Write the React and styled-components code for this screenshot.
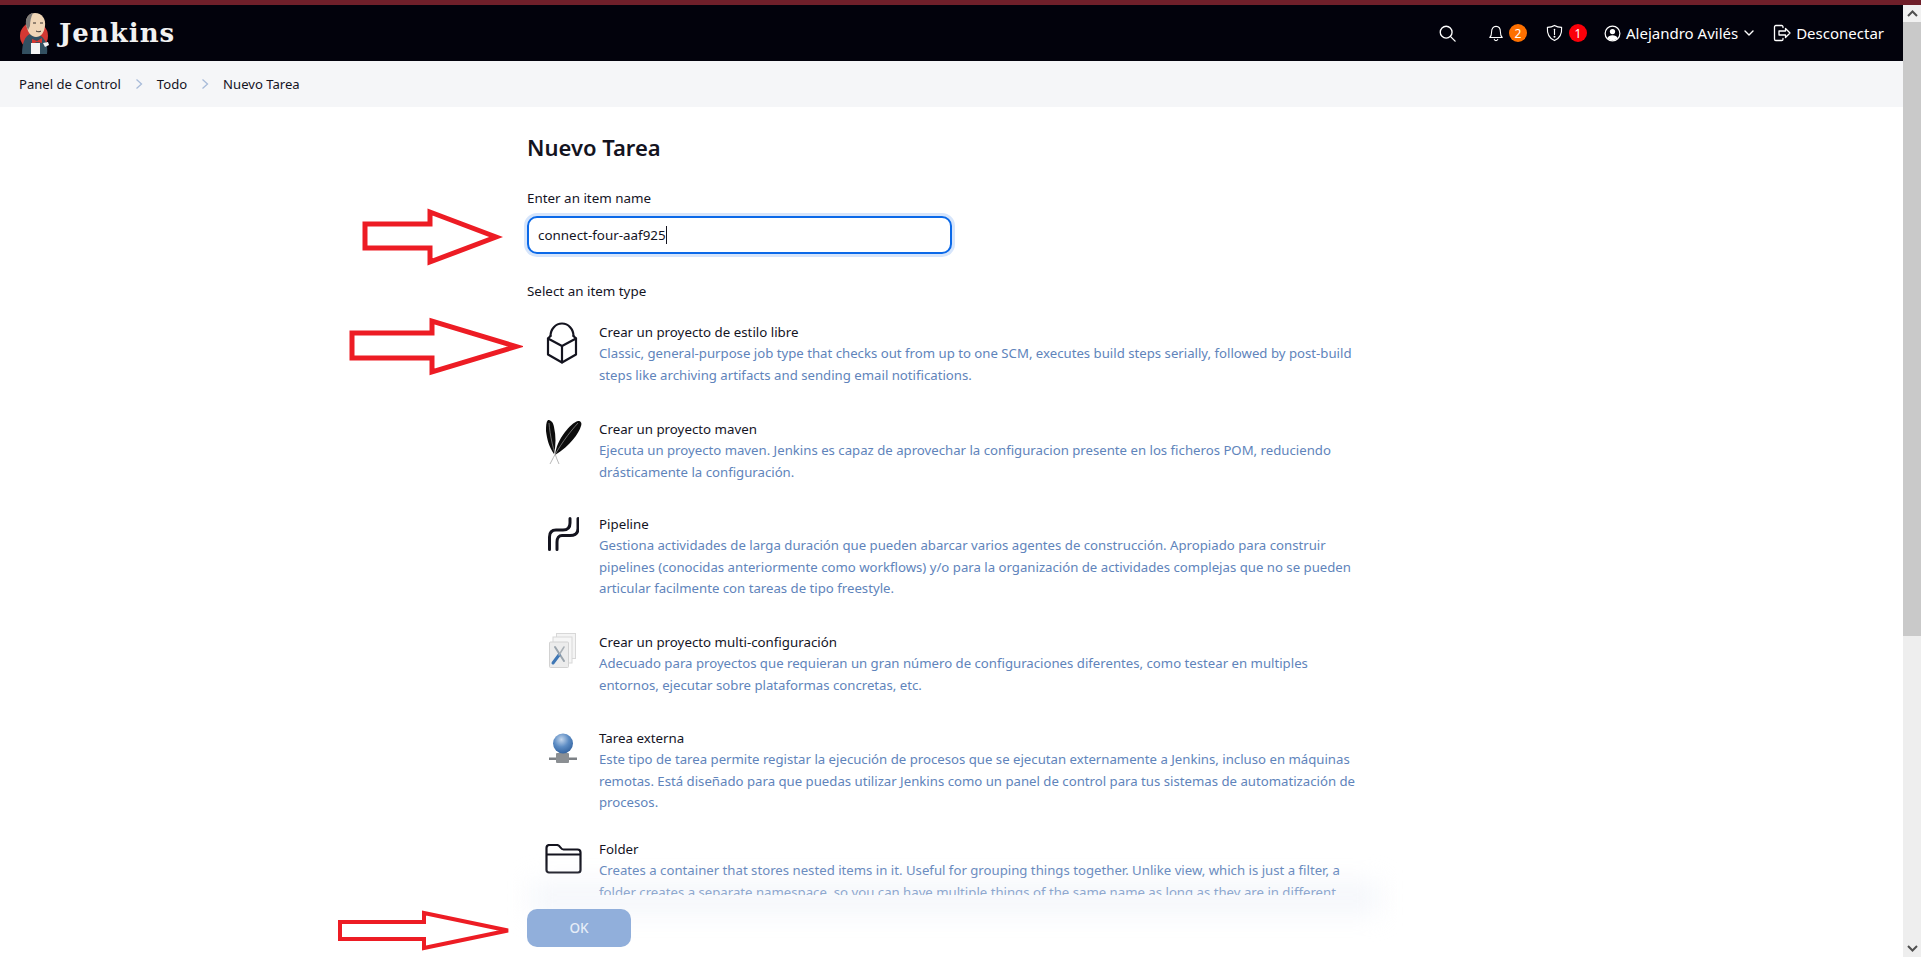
import React from 'react';
import styled, { createGlobalStyle } from 'styled-components';

const Global = createGlobalStyle`
  html, body { margin: 0; height: 100%; overflow: hidden; background: #fff; }
  body { font-family: "Noto Sans", "Open Sans", sans-serif; color: #14141f; }
  * { box-sizing: border-box; }
`;
const Shell = styled.div`display: flex; width: 1921px; height: 957px; position: relative; overflow: hidden;`;
const Page = styled.div`flex: 1; min-width: 0; display: flex; flex-direction: column; position: relative; overflow: hidden;`;
const Rail = styled.div`width: 18px; flex: none; margin-top: 5px; background: #eee; display: flex; flex-direction: column;`;
const RailBtn = styled.div`height: 17px; display: flex; align-items: center; justify-content: center; background: ${p => p.$top ? '#f1f1f1' : '#eee'};`;
const Thumb = styled.div`height: 614px; background: #c9c9c9;`;
const RailFill = styled.div`flex: 1;`;
const TopStripe = styled.div`position: absolute; top: 0; left: 0; width: 1921px; height: 5px; background: #6f1f2a; z-index: 5;`;
const Header = styled.header`height: 61px; padding: 5px 19px 0 19px; flex: none; background: #02020c; color: #fff; display: flex; align-items: center;`;
const Brand = styled.div`display: flex; align-items: center; gap: 10px;`;
const BrandName = styled.span`font-family: "DejaVu Serif", serif; font-weight: 700; font-size: 26px; letter-spacing: 1px; line-height: 1; color: #f2f2f2;`;
const Nav = styled.nav`margin-left: auto; display: flex; align-items: center; font-size: 15px;`;
const NavItem = styled.div`display: flex; align-items: center; gap: ${p => p.$gap || 5}px; margin-left: ${p => p.$ml || 0}px; white-space: nowrap; color: #fff;`;
const Badge = styled.span`width: 18px; height: 18px; border-radius: 50%; background: ${p => p.$c}; color: #fff; font-size: 12px; display: flex; align-items: center; justify-content: center;`;
const Crumbs = styled.div`height: 46px; flex: none; background: #f5f6f8; display: flex; align-items: center; padding: 0 19px; font-size: 13.1px; color: #14141f;`;
const Sep = styled.span`display: flex; margin: 0 14px;`;
const Main = styled.main`padding: 25px 0 0 527px; width: 1363px;`;
const Title = styled.h1`margin: 0 0 26px; font-size: 22px; line-height: 30px; font-weight: 600; color: #14141f;`;
const Label = styled.div`font-size: 13.4px; line-height: 20px; margin-bottom: ${p => p.$mb}px; color: #14141f;`;
const Field = styled.div`width: 425px; height: 38px; border: 2px solid #0b69e8; border-radius: 10px; box-shadow: 0 0 0 3px #d6e5fb; padding: 0 9px; display: flex; align-items: center; font-size: 13.4px; margin-bottom: 27px; background: #fff;`;
const Caret = styled.span`width: 1px; height: 18px; background: #14141f;`;
const List = styled.div`display: flex; flex-direction: column;`;
const Row = styled.div`display: flex; min-height: ${p => p.$h}px;`;
const IconBox = styled.div`width: 72px; flex: none; padding: ${p => p.$top}px 0 0 18px; & > svg { display: block; }`;
const Body = styled.div`width: 760px;`;
const ItemName = styled.div`font-size: 13.3px; line-height: 21px; color: #14141f;`;
const Desc = styled.div`font-size: 13.2px; line-height: 21.6px; color: #6084bb;`;
const Footer = styled.div`position: absolute; left: 0; right: 0; bottom: 0; height: 62px; background: #fff; padding: 14px 0 0 527px;
  &::before { content: ""; position: absolute; left: 530px; width: 850px; top: -14px; height: 34px; background: rgba(232,237,246,.42); filter: blur(12px); }`;
const OkButton = styled.button`position: relative; width: 104px; height: 38px; border: 0; border-radius: 10px; background: #91afdb; color: #e6edf7; font: 500 13.5px "Noto Sans", sans-serif;`;
const Mark = styled.svg`position: absolute; z-index: 4; left: ${p => p.$x}px; top: ${p => p.$y}px;`;

const Arrow = ({ l, bt, bb, hx, ht, hb, tip, sw }) => {
  const ox = l - 5;
  const oy = ht - 5;
  const mid = (ht + hb) / 2 - oy;
  return (
    <Mark $x={ox} $y={oy} width={tip - l + 12} height={hb - ht + 10}>
      <path d={`M5 ${bt - oy} H${hx - ox} V5 L${tip - ox} ${mid} L${hx - ox} ${hb - oy} V${bb - oy} H5 Z`} fill="none" stroke="#ed1c24" strokeWidth={sw} strokeLinejoin="miter" />
    </Mark>
  );
};

const Logo = () => (
  <svg width="30" height="41" viewBox="0 0 30 41">
    <circle cx="15" cy="23" r="14" fill="#d33833" />
    <path d="M3 41 C3 30 6 23 11 21 L22 23 C27 27 29 33 28 41Z" fill="#335061" />
    <path d="M7 10 C7 3 11 0 16 0 C23 0 27 6 26 13 C25 20 22 24 17 24 C12 24 8 19 7 10Z" fill="#f0d6b7" />
    <path d="M7 12 C6 5 10 1 14 0 C12 4 11 8 11 13 L9 17Z" fill="#7d7a78"/>
    <path d="M14 10h3M21 10h3M17 18c2 1 4 1 5 0" stroke="#231f20" strokeWidth=".9" fill="none"/>
    <path d="M13 26 L18 28 L23 25 L23 30 L18 29 L13 31Z" fill="#d33833"/>
    <rect x="12" y="30" width="9" height="11" fill="#f4f4f4" />
    <path d="M24 30l5-1 1 3-4 2Z" fill="#f4f4f4" />
  </svg>
);

const stroke = { fill: 'none', stroke: '#fff', strokeWidth: 1.5, strokeLinecap: 'round', strokeLinejoin: 'round' };

const Search = () => <svg width="17" height="17" viewBox="0 0 19 19" {...stroke}><circle cx="8" cy="8" r="6.6"/><path d="M13 13l5 5"/></svg>;
const Bell = () => <svg width="16" height="19" viewBox="0 0 18 20" {...stroke} strokeWidth="1.2"><path d="M2 14.5c1.5-1.5 2-3 2-6C4 4.5 6 2 9 2s5 2.5 5 6.5c0 3 .5 4.5 2 6Z"/><path d="M7 16.5c.3 2 3.7 2 4 0"/></svg>;
const Shield = () => <svg width="19" height="18" viewBox="0 0 19 19" {...stroke} strokeWidth="1.2"><path d="M9.5 1.500c2 1.300 4.500 2 7.500 2 .5 7-2 11.800-7.500 14C4 15.300 1.500 10.500 2 3.500c3 0 5.500-.7 7.500-2Z"/><path d="M9.5 5.500v5.500"/><circle cx="9.5" cy="13.500" r=".5"/></svg>;
const User = () => <svg width="17" height="17" viewBox="0 0 18 18"><circle cx="9" cy="9" r="7.800" fill="none" stroke="#fff" strokeWidth="1.300"/><circle cx="9" cy="7" r="2.800" fill="#fff"/><path d="M3.500 14c1-2.500 3-3.200 5.500-3.200s4.500.7 5.500 3.200c-3 3-8 3-11 0Z" fill="#fff"/></svg>;
const Chevron = () => <svg width="12" height="8" viewBox="0 0 12 8" {...stroke} strokeWidth="1.400"><path d="M2 2l4 4 4-4"/></svg>;
const Logout = () => <svg width="18" height="18" viewBox="0 0 18 18" {...stroke} strokeWidth="1.300"><path d="M10 3.500V2.800c0-.7-.6-1.300-1.300-1.300H2.800c-.7 0-1.300.6-1.300 1.300v12.400c0 .7.6 1.300 1.300 1.300h5.900c.7 0 1.300-.6 1.300-1.300v-.7"/><path d="M6 7h6.500V4.500L17 9l-4.500 4.500V11H6Z"/></svg>;
const CrumbChevron = () => <svg width="8" height="12" viewBox="0 0 8 12" fill="none" stroke="#a8bbd9" strokeWidth="1.300"><path d="M1.500 1.500L6.500 6l-5 4.500"/></svg>;

const box = { fill: 'none', stroke: '#14141f', strokeWidth: 2.2, strokeLinejoin: 'round', strokeLinecap: 'round' };
const FreeIcon = () => <svg width="34" height="42" viewBox="0 0 34 42" {...box}>
  <path d="M5.500 14A11.500 12.500 0 0 1 28.500 14"/>
  <path d="M3 16.500L5.500 14M31 16.500L28.500 14"/>
  <path d="M3 16.500L17 24L31 16.500V32.500L17 40.500L3 32.500Z"/>
  <path d="M17 24V40.500"/>
</svg>;
const Feather = () => <svg width="38" height="46" viewBox="0 0 38 46">
  <path d="M3 1C6 1 8 3 9 8C11 17 11 26 9 35C4 28 2 20 1 12C1 7 1 3 3 1Z" fill="#0c0c0c"/>
  <path d="M33 2C36 2 37 4 36 7C34 14 25 27 10 36C11 28 14 21 20 13C24 8 29 3 33 2Z" fill="#0c0c0c"/>
  <path d="M4 4C5 16 8 32 14 45M33 4C24 14 14 27 5 45" stroke="#9a9a9a" strokeWidth=".7" fill="none"/>
</svg>;
const PipeIcon = () => <svg width="34" height="34" viewBox="0 0 34 34" fill="none" stroke="#14141f" strokeWidth="3" strokeLinecap="round"><path d="M4.500 32.500V20c0-4.500 2.500-7 6.500-7h7c4 0 7-2 7-7V1.500"/><path d="M12 32.500V25c0-4 2-6.500 5-6.500h8c5 0 8-2.500 8-7V1.500"/></svg>;
const MultiIcon = () => <svg width="32" height="36" viewBox="0 0 32 36">
  <rect x="11.500" y=".500" width="19" height="25" fill="#f4f4f4" stroke="#d8d8d8"/>
  <rect x="8" y="4" width="19" height="26" fill="#f6f6f6" stroke="#d8d8d8"/>
  <rect x="4.500" y="9" width="19" height="25.500" rx="1" fill="#ececec" stroke="#d2d2d2"/>
  <path d="M10 14L19 28" stroke="#9aa4ad" strokeWidth="2" strokeLinecap="round"/>
  <path d="M8 30L14 22" stroke="#3f77b5" strokeWidth="3" strokeLinecap="round"/>
  <path d="M14 22L19 14" stroke="#a9b0b6" strokeWidth="1.500" strokeLinecap="round"/>
</svg>;
const GlobeIcon = () => <svg width="34" height="36" viewBox="0 0 34 36">
  <defs><radialGradient id="gl" cx=".42" cy=".3" r=".75"><stop offset="0" stopColor="#c3d6ec"/><stop offset=".5" stopColor="#5c8cc4"/><stop offset="1" stopColor="#2f5f9c"/></radialGradient></defs>
  <rect x="4" y="29.500" width="28" height="2.500" fill="#7d8186"/>
  <rect x="11" y="25" width="13" height="10" rx="1" fill="#8b8f93"/>
  <circle cx="18" cy="15.500" r="10" fill="url(#gl)"/>
</svg>;
const FolderIcon = () => <svg width="37" height="30" viewBox="0 0 37 30" fill="none" stroke="#14141f" strokeWidth="2.200" strokeLinejoin="round"><path d="M1.500 4c0-2 1-3 3-3h7.500c1.500 0 2.500 1 3.500 2.500S17 5.500 18.500 5.500H32.500c2 0 3 1 3 3V26c0 1.500-1 2.500-2.500 2.500H4c-1.500 0-2.500-1-2.500-2.500Z"/><path d="M1.500 10.500h34"/></svg>;
const ScrollArrow = ({ up }) => <svg width="11" height="7" viewBox="0 0 11 7" fill="none" stroke="#505050" strokeWidth="2"><path d={up ? 'M1 6l4.500-4.500L10 6' : 'M1 1l4.500 4.500L10 1'}/></svg>;

const items = [
  { name: 'Crear un proyecto de estilo libre', icon: <FreeIcon/>, top: 0, h: 97, text: 'Classic, general-purpose job type that checks out from up to one SCM, executes build steps serially, followed by post-build steps like archiving artifacts and sending email notifications.' },
  { name: 'Crear un proyecto maven', icon: <Feather/>, top: 0, h: 95, text: 'Ejecuta un proyecto maven. Jenkins es capaz de aprovechar la configuracion presente en los ficheros POM, reduciendo drásticamente la configuración.' },
  { name: 'Pipeline', icon: <PipeIcon/>, top: 3, h: 118, text: 'Gestiona actividades de larga duración que pueden abarcar varios agentes de construcción. Apropiado para construir pipelines (conocidas anteriormente como workflows) y/o para la organización de actividades complejas que no se pueden articular facilmente con tareas de tipo freestyle.' },
  { name: 'Crear un proyecto multi-configuración', icon: <MultiIcon/>, top: 1, h: 96, text: 'Adecuado para proyectos que requieran un gran número de configuraciones diferentes, como testear en multiples entornos, ejecutar sobre plataformas concretas, etc.' },
  { name: 'Tarea externa', icon: <GlobeIcon/>, top: 0, h: 111, text: 'Este tipo de tarea permite registar la ejecución de procesos que se ejecutan externamente a Jenkins, incluso en máquinas remotas. Está diseñado para que puedas utilizar Jenkins como un panel de control para tus sistemas de automatización de procesos.' },
  { name: 'Folder', icon: <FolderIcon/>, top: 5, h: 90, text: 'Creates a container that stores nested items in it. Useful for grouping things together. Unlike view, which is just a filter, a folder creates a separate namespace, so you can have multiple things of the same name as long as they are in different folders.' },
];

export default function App() {
  return (
    <Shell>
      <Global />
      <TopStripe />
      <Page>
        <Header>
          <Brand><Logo /><BrandName>Jenkins</BrandName></Brand>
          <Nav>
            <NavItem><Search /></NavItem>
            <NavItem $ml={32} $gap={5}><Bell /><Badge $c="#fe7000">2</Badge></NavItem>
            <NavItem $ml={18} $gap={5}><Shield /><Badge $c="#fa0009">1</Badge></NavItem>
            <NavItem $ml={17} $gap={5}><User />Alejandro Avilés<Chevron /></NavItem>
            <NavItem $ml={18} $gap={5}><Logout />Desconectar</NavItem>
          </Nav>
        </Header>
        <Crumbs>
          Panel de Control<Sep><CrumbChevron /></Sep>Todo<Sep><CrumbChevron /></Sep>Nuevo Tarea
        </Crumbs>
        <Main>
          <Title>Nuevo Tarea</Title>
          <Label $mb={8}>Enter an item name</Label>
          <Field>connect-four-aaf925<Caret /></Field>
          <Label $mb={21}>Select an item type</Label>
          <List>
            {items.map(it => (
              <Row key={it.name} $h={it.h}>
                <IconBox $top={it.top}>{it.icon}</IconBox>
                <Body><ItemName>{it.name}</ItemName><Desc>{it.text}</Desc></Body>
              </Row>
            ))}
          </List>
        </Main>
        <Footer><OkButton>OK</OkButton></Footer>
        <Arrow l={365} bt={224} bb={248} hx={430} ht={212} hb={262} tip={496} sw={5} />
        <Arrow l={352} bt={333} bb={358} hx={432} ht={321} hb={372} tip={516} sw={5} />
        <Arrow l={340} bt={922} bb={939} hx={424} ht={913} hb={948} tip={508} sw={4} />
      </Page>
      <Rail>
        <RailBtn $top><ScrollArrow up /></RailBtn>
        <Thumb />
        <RailFill />
        <RailBtn><ScrollArrow /></RailBtn>
      </Rail>
    </Shell>
  );
}
